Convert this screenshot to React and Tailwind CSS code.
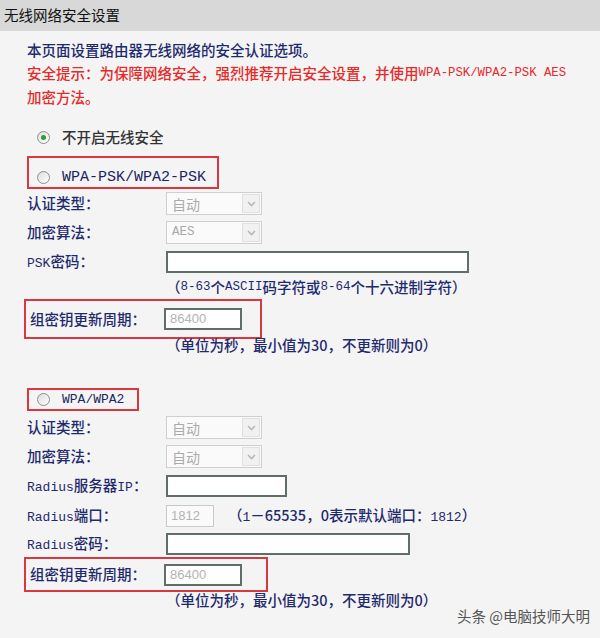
import React from "react";

const NAVY = "text-[#1f2a6e]";

function Radio({ checked }) {
  return (
    <span className="inline-flex w-[13px] h-[13px] shrink-0 rounded-full border border-[#8e8e8e] bg-gradient-to-br from-[#dcdcdc] to-white items-center justify-center">
      {checked && <span className="w-[5px] h-[5px] rounded-full bg-[#2e9a3c]" />}
    </span>
  );
}

function Select({ value, mono }) {
  return (
    <div className="w-[96px] h-[23px] border border-[#cfcfcf] bg-[#fafafa] flex items-center justify-between pl-[5px] pr-[1px]">
      <span
        className={
          mono
            ? "font-['Liberation_Mono',monospace] text-[12.5px] text-[#a8a8a8] leading-none"
            : "text-[14px] text-[#ababab] leading-none font-normal"
        }
      >
        {value}
      </span>
      <span className="w-[18px] h-[19px] border border-[#e0e0e0] bg-[#f1f1f1] flex items-center justify-center">
        <svg width="9" height="6" viewBox="0 0 9 6">
          <path d="M1 1 L4.5 4.5 L8 1" fill="none" stroke="#b8b8b8" strokeWidth="1.6" />
        </svg>
      </span>
    </div>
  );
}

function Input({ w, value, disabled }) {
  return (
    <div
      className={
        (disabled
          ? "border border-[#c9c9c9] bg-[#fafafa] "
          : "border-2 border-[#5f6e66] bg-white ") +
        "h-[22px] flex items-center pl-[4px] text-[13px] font-normal text-[#b3b3b3] font-['Liberation_Sans',sans-serif] " +
        w
      }
    >
      {value}
    </div>
  );
}

function Label({ children, w = "w-[139px]" }) {
  return <div className={w + " shrink-0 " + NAVY + " leading-none"}>{children}</div>;
}

function M({ children, size = "text-[12.5px]" }) {
  return <span className={"font-['Liberation_Mono',monospace] leading-none " + size}>{children}</span>;
}

export default function App() {
  return (
    <div className="w-[600px] h-[638px] overflow-hidden bg-[#f4f4f4] font-['Noto_Sans_CJK_SC',sans-serif] font-medium text-[14.5px] relative">
      <div className="h-[31px] bg-[#d8d8d8] flex items-center pl-[4px] text-[#111] font-normal leading-none">
        无线网络安全设置
      </div>

      <div className="pl-[27px]">
        <div className="mt-[8px]">
          <div className={"h-[23px] flex items-center leading-none " + NAVY}>本页面设置路由器无线网络的安全认证选项。</div>
          <div className="h-[23px] flex items-center leading-none text-[#e62a2a]">
            <span>安全提示：为保障网络安全，强烈推荐开启安全设置，并使用</span>
            <M size="text-[12.3px]">WPA-PSK/WPA2-PSK AES</M>
          </div>
          <div className="h-[25px] flex items-center leading-none text-[#e62a2a]">加密方法。</div>
        </div>

        {/* radio 1 */}
        <div className="mt-[15px] h-[24px] flex items-center pl-[9.5px] gap-[12.5px] text-[#333] leading-none">
          <Radio checked />
          <span>不开启无线安全</span>
        </div>

        {/* box 1 */}
        <div className="mt-[7px] w-[192px] h-[33px] border-2 border-[#d8383e] pl-[7.5px]">
          <div className="mt-[9px] h-[20px] flex items-center gap-[12.5px] text-[#1a2460] leading-none">
            <Radio />
            <M size="text-[15px]">WPA-PSK/WPA2-PSK</M>
          </div>
        </div>

        <div className="h-[29px] flex items-center">
          <Label>认证类型：</Label>
          <Select value="自动" />
        </div>
        <div className="h-[29px] flex items-center">
          <Label>加密算法：</Label>
          <Select value="AES" mono />
        </div>
        <div className="h-[29px] flex items-center">
          <Label>
            <M size="text-[13px]">PSK</M>密码：
          </Label>
          <Input w="w-[303px]" />
        </div>
        <div className={"h-[23px] flex items-center pl-[139px] leading-none " + NAVY}>
          （<M size="text-[12.5px]">8-63</M>个<M size="text-[12.5px]">ASCII</M>码字符或<M size="text-[12.5px]">8-64</M>个十六进制字符）
        </div>

        {/* box 2 */}
        <div className="ml-[-3px] w-[238px] h-[40px] border-2 border-[#d8383e] pl-[4px] flex items-center">
          <Label w="w-[134px]">组密钥更新周期：</Label>
          <Input w="w-[78px]" value="86400" />
        </div>
        <div className={"h-[12px] flex items-center pl-[139px] leading-none " + NAVY}>
          （单位为秒，最小值为30，不更新则为0）
        </div>

        {/* box 3 */}
        <div className="mt-[37px] w-[112px] h-[23px] border-2 border-[#d8383e] pl-[7.5px] flex items-center gap-[12.5px] text-[#1a2460] leading-none">
          <Radio />
          <M size="text-[13px]">WPA/WPA2</M>
        </div>

        <div className="mt-[2px] h-[29px] flex items-center">
          <Label>认证类型：</Label>
          <Select value="自动" />
        </div>
        <div className="h-[29px] flex items-center">
          <Label>加密算法：</Label>
          <Select value="自动" />
        </div>
        <div className="h-[30px] flex items-center">
          <Label>
            <M size="text-[13px]">Radius</M>服务器<M size="text-[13px]">IP</M>：
          </Label>
          <Input w="w-[121px]" />
        </div>
        <div className="h-[29px] flex items-center">
          <Label>
            <M size="text-[13px]">Radius</M>端口：
          </Label>
          <Input w="w-[48px]" value="1812" disabled />
          <span className={"ml-[14px] leading-none " + NAVY}>
            （<M size="text-[13px]">1</M>－65535，0表示默认端口：<M size="text-[13px]">1812</M>）
          </span>
        </div>
        <div className="h-[27px] flex items-center">
          <Label>
            <M size="text-[13px]">Radius</M>密码：
          </Label>
          <Input w="w-[244px]" />
        </div>

        {/* box 4 */}
        <div className="ml-[-3px] w-[244px] h-[35px] border-2 border-[#d8383e] pl-[4px] flex items-center">
          <Label w="w-[134px]">组密钥更新周期：</Label>
          <Input w="w-[78px]" value="86400" />
        </div>
        <div className={"h-[16px] flex items-center pl-[139px] leading-none " + NAVY}>
          （单位为秒，最小值为30，不更新则为0）
        </div>
      </div>

      <div className="h-[16px] flex items-center justify-end pr-[10px] text-[#555] font-normal leading-none">
        头条 @电脑技师大明
      </div>
    </div>
  );
}
